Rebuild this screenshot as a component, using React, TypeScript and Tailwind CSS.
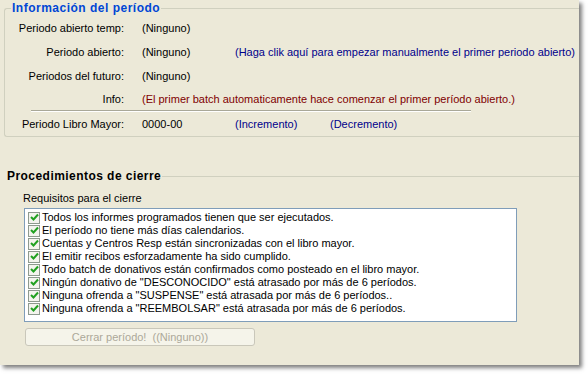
import React from "react";

const font = { fontFamily: "Tahoma, 'Liberation Sans', Arial, sans-serif" };

const requisitos = [
  "Todos los informes programados tienen que ser ejecutados.",
  "El período no tiene más días calendarios.",
  "Cuentas y Centros Resp están sincronizadas con el libro mayor.",
  "El emitir recibos esforzadamente ha sido cumplido.",
  "Todo batch de donativos están confirmados como posteado en el libro mayor.",
  'Ningún donativo de "DESCONOCIDO" está atrasado por más de 6 períodos.',
  'Ninguna ofrenda a "SUSPENSE" está atrasada por más de 6 períodos..',
  'Ninguna ofrenda a "REEMBOLSAR" está atrasada por más de 6 períodos.',
];

function Check() {
  return (
    <span className="w-[12px] h-[12px] shrink-0 border border-[#8e9a8e] bg-[#f4f4ee] flex items-center justify-center">
      <svg width="9" height="9" viewBox="0 0 9 9">
        <path d="M1 4 L3.5 6.5 L8 1.5" stroke="#21a121" strokeWidth="2" fill="none" />
      </svg>
    </span>
  );
}

function Row({ label, value, extra, className }: { label: string; value: string; extra?: React.ReactNode; className?: string }) {
  return (
    <div className={"flex items-center " + (className ?? "h-[24px]")}>
      <span className="w-[119px] text-right text-black">{label}</span>
      <span className="w-[18px]" />
      <span className="w-[93px] text-black">{value}</span>
      {extra}
    </div>
  );
}

export default function App() {
  return (
    <div className="w-[588px] h-[375px] bg-white text-[11px] leading-[13px]" style={font}>
      <div className="w-[579px] h-[365px] bg-[#ECE9D8] overflow-hidden shadow-[3px_3px_4px_rgba(0,0,0,0.5)] pt-[2px]">
        <fieldset className="ml-[4px] w-[575px] border border-r-0 border-[#D0D0BF] rounded-l-[3px] pb-0">
          <legend className="ml-[6px] px-[1px] font-bold text-[#0046D5] text-[12px] leading-[13px] tracking-[0.5px]">
            Información del período
          </legend>
          <div className="pt-[1px]">
            <Row label="Periodo abierto temp:" value="(Ninguno)" />
            <Row
              label="Periodo abierto:"
              value="(Ninguno)"
              extra={<span className="text-[#00008B]">(Haga clik aquí para empezar manualmente el primer periodo abierto)</span>}
            />
            <Row label="Periodos del futuro:" value="(Ninguno)" />
            <Row
              label="Info:"
              value=""
              className="h-[22px]"
              extra={
                <span className="-ml-[93px] text-[#800000]">
                  (El primer batch automaticamente hace comenzar el primer período abierto.)
                </span>
              }
            />
            <div className="ml-[26px] w-[440px] border-t border-b border-t-[#A9A898] border-b-white" />
            <Row
              label="Periodo Libro Mayor:"
              value="0000-00"
              extra={
                <>
                  <span className="w-[95px] text-[#00008B]">(Incremento)</span>
                  <span className="text-[#00008B]">(Decremento)</span>
                </>
              }
            />
          </div>
        </fieldset>

        <div className="mt-[33px] flex items-center h-[13px] pl-[7px]">
          <span className="font-bold text-black text-[12px] tracking-[0.45px]">Procedimientos de cierre</span>
          <div className="flex-1 border-t border-[#D0D0BF] ml-[1px]" />
        </div>

        <div className="mt-[9px] pl-[23px] text-black">Requisitos para el cierre</div>

        <div className="mt-[3px] ml-[24px] w-[493px] h-[114px] bg-white border border-[#7F9DB9] pt-[2px]">
          {requisitos.map((r) => (
            <div key={r} className="h-[13px] flex items-center pl-[3px] gap-[2px] text-black whitespace-nowrap">
              <Check />
              <span>{r}</span>
            </div>
          ))}
        </div>

        <div className="mt-[6px] ml-[25px] w-[230px] h-[18px] border border-[#C9C7BA] rounded-[3px] bg-[#F5F4EA] flex items-center justify-center text-[#ACA899]">
          Cerrar período!&nbsp;&nbsp;((Ninguno))
        </div>
      </div>
    </div>
  );
}
